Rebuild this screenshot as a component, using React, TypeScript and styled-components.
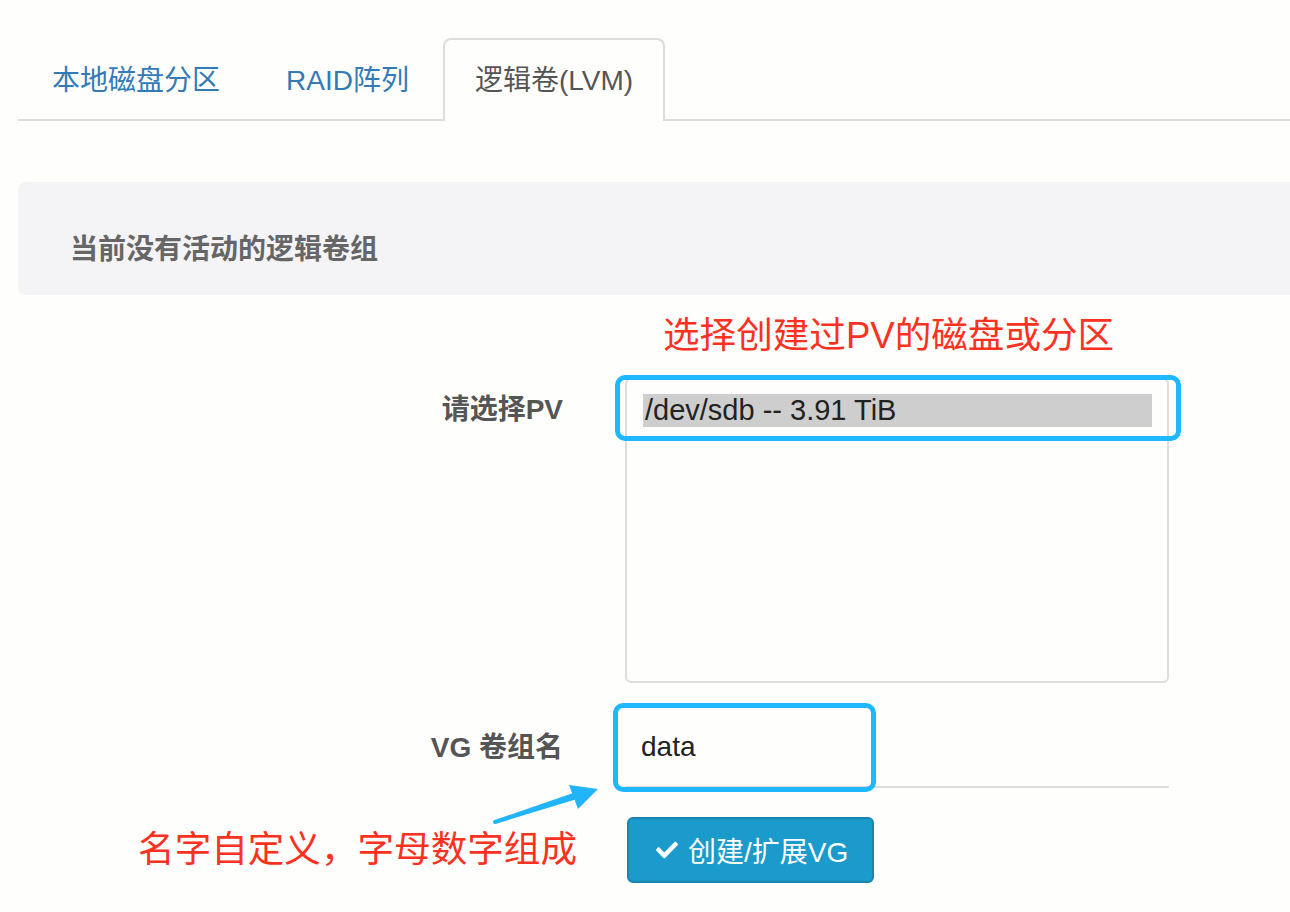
import styled, { createGlobalStyle } from "styled-components";
import { FaCheck } from "react-icons/fa";

const GlobalStyle = createGlobalStyle`
  html, body {
    margin: 0;
    background: #fefefd;
    overflow: hidden;
  }
  body {
    font-family: "Liberation Sans", "Noto Sans CJK SC", sans-serif;
    color: #333;
  }
`;

const Page = styled.div`
  padding: 38px 0 0 18px;
`;

const Tabs = styled.ul`
  display: flex;
  gap: 2px;
  margin: 0;
  padding: 0 0 0 2px;
  list-style: none;
  border-bottom: 2px solid #ddd;
`;

const Tab = styled.li<{ $active?: boolean }>`
  margin-bottom: -2px;
  padding: 0 30px;
  font-size: 28px;
  line-height: 81px;
  border: 2px solid ${(p) => (p.$active ? "#ddd" : "transparent")};
  border-bottom: none;
  border-radius: 8px 8px 0 0;
  background: ${(p) => (p.$active ? "#fefefd" : "transparent")};
  color: ${(p) => (p.$active ? "#555" : "#337ab7")};
  height: 83px;
  box-sizing: border-box;
  cursor: pointer;
`;

const Panel = styled.div`
  margin: 61px -12px 0 0;
  height: 113px;
  box-sizing: border-box;
  padding: 17px 0 0 52px;
  display: flex;
  align-items: center;
  background: #f4f4f6;
  border-radius: 8px;
  font-size: 28px;
  font-weight: bold;
  color: #666;
`;

const Form = styled.form`
  position: relative;
  display: flex;
  flex-direction: column;
`;

const Row = styled.div<{ $gap: number; $center?: boolean }>`
  display: grid;
  grid-template-columns: 545px 544px;
  column-gap: 62px;
  align-items: ${(p) => (p.$center ? "center" : "start")};
  margin-top: ${(p) => p.$gap}px;
`;

const Label = styled.label<{ $top?: number }>`
  text-align: right;
  font-size: 28px;
  font-weight: bold;
  line-height: 40px;
  color: #555;
  padding-top: ${(p) => p.$top ?? 0}px;
`;

const Note = styled.div<{ $right?: boolean }>`
  font-size: 36.6px;
  line-height: 44px;
  color: #fb3122;
  padding-left: ${(p) => (p.$right ? 0 : 38)}px;
  text-align: ${(p) => (p.$right ? "right" : "left")};
  margin-right: ${(p) => (p.$right ? -14 : 0)}px;
`;

const Control = styled.div`
  position: relative;
`;

const ListBox = styled.div`
  height: 305px;
  box-sizing: border-box;
  border: 2px solid #ddd;
  border-radius: 6px;
  padding: 14px 15px 0 16px;
  background: #fefefd;
`;

const Option = styled.div<{ $selected?: boolean }>`
  height: 33px;
  line-height: 33px;
  padding-left: 2px;
  font-size: 29px;
  color: #222;
  background: ${(p) => (p.$selected ? "#cecece" : "transparent")};
`;

const Field = styled.div`
  height: 80px;
  box-sizing: border-box;
  border-bottom: 2px solid #ddd;
`;

const TextInput = styled.input`
  width: 250px;
  height: 78px;
  box-sizing: border-box;
  border: none;
  outline: none;
  background: transparent;
  padding: 0 0 0 16px;
  font-family: inherit;
  font-size: 28px;
  color: #222;
`;

// blue callout frames drawn over the controls
const Callout = styled.div<{ $l: number; $t: number; $w: number; $h: number }>`
  position: absolute;
  left: ${(p) => p.$l}px;
  top: ${(p) => p.$t}px;
  width: ${(p) => p.$w}px;
  height: ${(p) => p.$h}px;
  box-sizing: border-box;
  border: 5px solid #1fb7fe;
  border-radius: 10px;
  pointer-events: none;
`;

const Button = styled.button`
  justify-self: start;
  margin-left: 2px;
  height: 66px;
  box-sizing: border-box;
  padding: 0 24px 0 27px;
  display: inline-flex;
  align-items: center;
  gap: 10px;
  background: #1a9bcb;
  border: 2px solid #1785b0;
  border-radius: 6px;
  color: #fff;
  font-family: inherit;
  font-size: 28px;
  cursor: pointer;
`;

const Arrow = styled.svg`
  position: absolute;
  left: 472px;
  top: 480px;
  width: 115px;
  height: 50px;
  pointer-events: none;
`;

export default function App() {
  return (
    <>
      <GlobalStyle />
      <Page>
        <Tabs>
          <Tab>本地磁盘分区</Tab>
          <Tab>RAID阵列</Tab>
          <Tab $active>逻辑卷(LVM)</Tab>
        </Tabs>

        <Panel>当前没有活动的逻辑卷组</Panel>

        <Form onSubmit={(e) => e.preventDefault()}>
          <Row $gap={19}>
            <div />
            <Note>选择创建过PV的磁盘或分区</Note>
          </Row>

          <Row $gap={20}>
            <Label $top={12}>请选择PV</Label>
            <Control>
              <ListBox>
                <Option $selected>/dev/sdb -- 3.91 TiB</Option>
              </ListBox>
              <Callout $l={-10} $t={-3} $w={566} $h={66} />
            </Control>
          </Row>

          <Row $gap={25} $center>
            <Label>VG 卷组名</Label>
            <Control>
              <Field>
                <TextInput defaultValue="data" />
              </Field>
              <Callout $l={-12} $t={-5} $w={263} $h={89} />
            </Control>
          </Row>

          <Row $gap={29} $center>
            <Note $right>名字自定义，字母数字组成</Note>
            <Button type="submit">
              <FaCheck size={22} />
              创建/扩展VG
            </Button>
          </Row>

          <Arrow viewBox="0 0 115 50">
            <polygon points="5.6,48.9 4.4,45.1 83.9,17.7 86.1,24.3" fill="#22b4f8" />
            <circle cx="5" cy="47" r="2" fill="#22b4f8" />
            <polygon points="79,10 108,14 88,34" fill="#22b4f8" />
          </Arrow>
        </Form>
      </Page>
    </>
  );
}
